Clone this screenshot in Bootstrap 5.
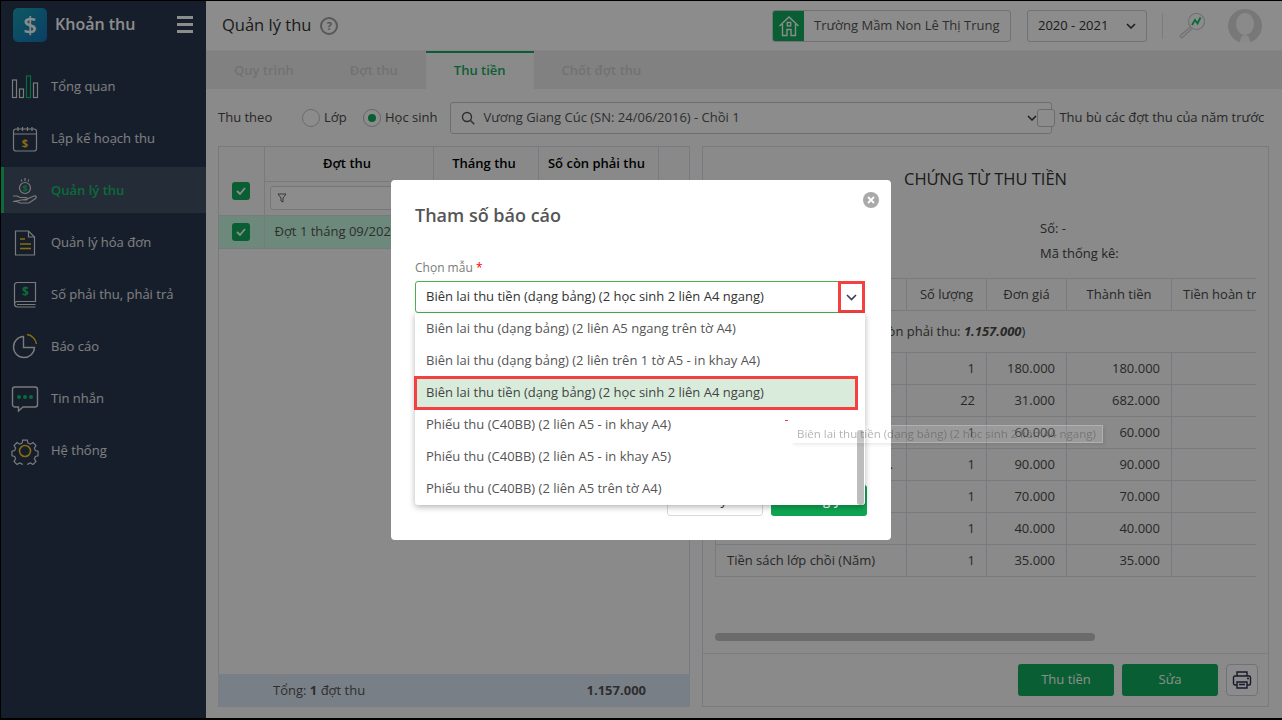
<!doctype html>
<html lang="vi">
<head>
<meta charset="utf-8">
<title>Quản lý thu</title>
<link rel="stylesheet" href="https://cdn.jsdelivr.net/npm/bootstrap@5.3.0/dist/css/bootstrap.min.css">
<style>
html,body{height:100%;overflow:hidden}
body{font-family:"Open Sans","Noto Sans",sans-serif;font-size:13px;color:#4a4a4a;background:#000}
.app-frame{height:720px;padding:1px 0 2px 1px;background:#000}
.app-inner{height:100%;background:#fbfbfb}
.side-bar{width:205px;background:#283750;flex:none}
.side-head{height:62px;padding:7px 13px 0 12px}
.logo-box{width:34px;height:34px;border-radius:5px;background:linear-gradient(135deg,#17a2b3,#1372b8);color:#fff;font-size:24px;font-weight:600;line-height:34px;text-align:center}
.logo-name{font-size:16px;font-weight:600;color:#fff;margin-left:8px}
.burger{width:16px;margin-left:auto;margin-top:-1px}
.burger i{display:block;height:2.5px;background:#fff;margin-bottom:4.5px}
.side-item{height:46px;margin-bottom:6px;color:#e8e8e8;padding:2px 0 0 7px;gap:12px;border-left:3px solid transparent}
.side-item svg{flex:none}
.side-item.is-on{background:#435064;border-left-color:#14c36a;color:#14c36a;font-weight:600}
.top-bar{height:50px;background:#fff;border-bottom:1px solid #f0f0f0;padding:0 20px 0 16px;flex:none}
.page-name{font-size:16.5px;color:#333}
.help-dot{width:18px;height:18px;border:2px solid #a0a0a0;border-radius:50%;color:#999;font-size:11px;font-weight:700;line-height:14px;text-align:center;margin-left:9px}
.school-box{height:32px;width:239px;border:1px solid #cfcfcf;border-radius:3px;color:#555;overflow:hidden;margin-right:16px;margin-left:auto}
.school-ico{width:31px;height:100%;background:#12ad5d}
.school-name{margin-left:10px}
.year-box{height:32px;width:120px;border:1px solid #cfcfcf;border-radius:3px;padding:0 10px;color:#333}
.top-sep{width:1px;height:26px;background:#e0e0e0;margin:0 16px 0 15px}
.top-search{margin-right:23px}
.tab-bar{height:38px;background:#ececec;padding-left:0;margin:0;list-style:none;flex:none}
.tab-one{padding:0 28px;line-height:38px;color:#cfcfcf;font-weight:600}
.tab-one.is-on{background:#fbfbfb;color:#12ad5d;box-shadow:inset 0 2px 0 #12ad5d}
.work-area{padding:13px 13px 11px 12px;min-height:0}
.filter-row{height:32px;margin-bottom:12px;flex:none}
.round-opt{width:18px;height:18px;border:1px solid #c4c4c4;border-radius:50%;background:#fff;margin-right:4px}
.round-opt.is-on{border-color:#bbb}
.round-opt.is-on::after{content:"";width:8px;height:8px;border-radius:50%;background:#12ad5d}
.combo-box{width:602px;height:32px;border:1px solid #c9c9c9;border-radius:3px;background:#fff;padding:0 10px;margin-left:13px;color:#555}
.tick-box{width:18px;height:18px;border-radius:3px;background:#12ad5d;flex:none}
.tick-empty{background:#fff;border:1px solid #c4c4c4;margin-left:-15px;margin-right:4px;position:relative;z-index:1}
.left-pane{width:472px;flex:none;border:1px solid #dcdee8;border-bottom:0}
.right-pane{flex:1;margin-left:12px;border:1px solid #dcdee8;min-width:0}
.grid-tbl{table-layout:fixed;border-collapse:collapse;width:470px;color:#333}
.grid-tbl th,.grid-tbl td{border:1px solid #dcdee8;font-weight:400;padding:0;vertical-align:middle}
.grid-tbl tr>*:first-child{border-left:0}
.grid-tbl tr>*:last-child{border-right:0}
.grid-tbl tr:first-child>*{border-top:0}
.head-cell{height:34px;text-align:center;background:#fafafa;color:#000!important;padding-right:3px!important}
.head-fill{background:#fafafa}
.head-tick{margin-top:20px}
.filter-cell{height:34px;background:#fafafa;padding:0 5px 1px!important}
.filter-input{height:24px;border:1px solid #d8d8d8;border-radius:3px;background:#fff;padding-left:6px;margin-right:-4px}
.row-sel>*{background:#c6fae1;height:33px;color:#555}
.row-sel .row-name{padding-left:10px;white-space:nowrap}
.sum-bar{height:33px;background:#dde8f5;margin:0 -1px;padding:0 44px 0 55px;color:#555}
.doc-title{font-size:16.5px;color:#333;text-align:center;margin:21px 0 0;line-height:22px;font-weight:400}
.doc-meta{margin:26px 0 0 337px;line-height:25px;color:#444}
.doc-wrap{margin:12px 12px 0 12px;overflow:hidden}
.doc-tbl{table-layout:fixed;border-collapse:collapse;width:800px;color:#4a4a4a}
.doc-tbl th,.doc-tbl td{border:1px solid #dcdee8;padding:0 11px;height:32px;white-space:nowrap;overflow:hidden;text-overflow:ellipsis;font-weight:400}
.doc-tbl th{text-align:center}
.doc-tbl .num{text-align:right}
.doc-tbl .sum-row td{height:42px;padding-left:16px}
.h-scroll{width:380px;height:8px;border-radius:4px;background:#c4c4c4;margin:auto 0 12px 12px}
.pane-foot{height:53px;border-top:1px solid #e4e4ea;padding:0 10px 0 0;gap:8px;flex:none}
.act-btn{width:96px;height:32px;background:#12ad5d;color:#fff;border:0;border-radius:3px;font-size:13px;padding:0}
.print-btn{width:32px;height:32px;border:1px solid #d0d0d8;border-radius:4px;background:#fff;padding:0}
.modal-backdrop.dim-layer{--bs-backdrop-opacity:.45}
.modal.form-modal{--bs-modal-zindex:1055;overflow:visible}
.form-dialog{width:500px;max-width:500px;margin:180px 0 0 391px}
.form-box{height:360px;border:0;border-radius:4px;padding:23px 24px 24px;background:#fff;color:#333}
.form-title{font-size:18px;font-weight:600;color:#555;line-height:24px;margin:0}
.close-dot{position:absolute;right:12px;top:12px;width:16px;height:16px;border-radius:50%;background:#a9a9a9;padding:0;border:0}
.form-label-t{color:#7b7b7b;font-size:12px;margin:32px 0 4px;line-height:18px}
.req-star{color:#f00}
.pick-wrap{position:relative;width:450px}
.pick-box{height:32px;border:1px solid #4caf50;border-radius:3px;padding-left:10px;background:#fff}
.pick-arrow{width:27px;height:32px;margin:-1px -1px -1px auto;border:3px solid #f44040}
.pick-menu{position:absolute;left:0;top:32px;width:450px;height:192px;background:#fff;box-shadow:0 2px 6px rgba(0,0,0,.3);border-radius:0 0 3px 3px;z-index:3}
.pick-item{height:32px;line-height:30px;padding-left:11px;width:442px;color:#555}
.pick-item.is-picked{background:#d9ecdc;outline:3px solid #f44040;outline-offset:-2px;color:#444}
.menu-thumb{position:absolute;right:1px;top:117px;bottom:0;width:7px;border-radius:3px;background:#bdbdbd}
.hint-tip{position:absolute;left:376px;top:112px;width:312px;height:18px;background:rgba(255,255,255,.14);border:1px solid rgba(255,255,255,.22);box-shadow:2px 2px 3px rgba(0,0,0,.08);font-size:11.5px;line-height:16px;padding-left:5px;color:rgba(70,60,65,.4);white-space:nowrap;z-index:4}
.hint-mark{position:absolute;left:370px;top:107px;width:3px;height:1px;background:#f44040;z-index:4}
.form-actions{margin-top:auto;gap:8px}
.ghost-btn{width:96px;height:31px;border:1px solid #d9d9d9;background:#fff;border-radius:3px;font-size:13px;color:#333;padding:0}
.ok-btn{width:96px;height:31px;border:0;background:#0ea552;color:#fff;border-radius:3px;font-size:13px;font-weight:600;padding:0}
</style>
</head>
<body>
<div class="app-frame">
<div class="app-inner d-flex">
  <aside class="side-bar d-flex flex-column">
    <div class="side-head d-flex align-items-start">
      <div class="logo-box">$</div>
      <div class="logo-name lh-1 mt-2">Khoản thu</div>
      <div class="burger mt-2"><i></i><i></i><i></i></div>
    </div>
    <div class="side-item d-flex align-items-center">
      <svg width="28" height="24" viewBox="0 0 28 24" fill="none" stroke="#e0e0e0" stroke-width="1.2"><rect x="1.5" y="5" width="4" height="17.5"/><rect x="8.5" y="14" width="4" height="8.5"/><rect x="15.5" y="1" width="4" height="21.5" stroke="#14c36a"/><rect x="22.5" y="8" width="4" height="14.5"/></svg>
      <span>Tổng quan</span>
    </div>
    <div class="side-item d-flex align-items-center">
      <svg width="28" height="28" viewBox="0 0 28 28" fill="none" stroke="#e0e0e0" stroke-width="1.2"><rect x="2.5" y="4" width="23" height="22" rx="2.5"/><path d="M2.500 9h23M7 2v4M11.500 2v4M16.500 2v4M21 2v4"/><text x="14" y="22" text-anchor="middle" font-size="11" font-weight="700" fill="#fbc71d" stroke="none" font-family="Open Sans">$</text></svg>
      <span>Lập kế hoạch thu</span>
    </div>
    <div class="side-item is-on d-flex align-items-center">
      <svg width="28" height="28" viewBox="0 0 28 28" fill="none" stroke="#e0e0e0" stroke-width="1.2"><circle cx="14" cy="11" r="5.5"/><text x="14" y="14.500" text-anchor="middle" font-size="9" font-weight="700" fill="#14c36a" stroke="none" font-family="Open Sans">$</text><path d="M14 1v3M10.500 2.500v2M17.500 2.500v2M2 19h4l3 1.500h6c1.500 0 1.500 2.500 0 2.500h-3M16 22l7-3c2-.7 3 1 1.500 2.500L18 26H9l-3-1.500H2z"/></svg>
      <span>Quản lý thu</span>
    </div>
    <div class="side-item d-flex align-items-center">
      <svg width="28" height="28" viewBox="0 0 28 28" fill="none" stroke="#e0e0e0" stroke-width="1.2"><path d="M4.500 2h13l6 6v18h-19z"/><path d="M17.500 2v6h6"/><path d="M9 10h5M9 15h11M9 19.500h11" stroke="#fbc71d" stroke-width="1.6"/></svg>
      <span>Quản lý hóa đơn</span>
    </div>
    <div class="side-item d-flex align-items-center">
      <svg width="28" height="28" viewBox="0 0 28 28" fill="none" stroke="#e0e0e0" stroke-width="1.2"><path d="M6.500 1.500h18v19h-18c-2 0-3 1-3 2.500V4c0-1.500 1-2.500 3-2.500zM3.500 23c0 1.500 1 3 3 3h18M6 23.500h18.500"/><text x="14.500" y="15" text-anchor="middle" font-size="12" font-weight="700" fill="#14c36a" stroke="none" font-family="Open Sans">$</text></svg>
      <span>Số phải thu, phải trả</span>
    </div>
    <div class="side-item d-flex align-items-center">
      <svg width="28" height="28" viewBox="0 0 28 28" fill="none" stroke="#e0e0e0" stroke-width="1.4"><path d="M12.500 3.500a10.500 10.500 0 1 0 11 11h-11z"/><path d="M16 1.500a11 11 0 0 1 9.500 9.500" stroke="#fbc71d"/></svg>
      <span>Báo cáo</span>
    </div>
    <div class="side-item d-flex align-items-center">
      <svg width="28" height="28" viewBox="0 0 28 28" fill="none" stroke="#e0e0e0" stroke-width="1.4"><path d="M4 2h20a2.500 2.500 0 0 1 2.500 2.500v15A2.500 2.500 0 0 1 24 22H12l-4.500 4v-4H4a2.500 2.500 0 0 1-2.500-2.500v-15A2.500 2.500 0 0 1 4 2z"/><g fill="#14c36a" stroke="none"><circle cx="8" cy="12" r="2"/><circle cx="14" cy="12" r="2"/><circle cx="20" cy="12" r="2"/></g></svg>
      <span>Tin nhắn</span>
    </div>
    <div class="side-item d-flex align-items-center">
      <svg width="28" height="28" viewBox="0 0 28 28" fill="none" stroke="#e0e0e0" stroke-width="1.3"><path d="M11.500 2h5l.8 3.300 2.700 1.100 2.900-1.800 3.300 3.300-1.800 2.900 1.100 2.700 3 .8v5l-3 .8-1.100 2.700 1.800 2.900-3.300 3.300-2.900-1.800-2.700 1.100-.8 3h-5l-.8-3-2.700-1.100-2.900 1.800-3.300-3.300 1.800-2.900-1.100-2.700-3-.8v-5l3-.8 1.100-2.700-1.800-2.900 3.300-3.300 2.900 1.800 2.700-1.100z" transform="translate(1.400 1.400) scale(.9)"/><circle cx="14" cy="14" r="5.500" stroke="#fbc71d" stroke-width="1.6"/></svg>
      <span>Hệ thống</span>
    </div>
  </aside>

  <main class="flex-grow-1 d-flex flex-column" style="min-width:0">
    <header class="top-bar d-flex align-items-center">
      <span class="page-name">Quản lý thu</span>
      <span class="help-dot">?</span>
      <div class="school-box d-flex align-items-center">
        <span class="school-ico d-flex align-items-center justify-content-center">
          <svg width="22" height="22" viewBox="0 0 22 22" fill="none" stroke="#fff" stroke-width="1.4"><path d="M1.500 11 11 2l9.500 9M4.500 9v11.500h4.500v-6h4v6h4.500V9"/><rect x="9.300" y="7.500" width="3.400" height="3.400"/></svg>
        </span>
        <span class="school-name">Trường Mầm Non Lê Thị Trung</span>
      </div>
      <div class="year-box d-flex align-items-center justify-content-between">
        <span>2020 - 2021</span>
        <svg width="10" height="6" viewBox="0 0 10 6" fill="none" stroke="#333" stroke-width="1.5"><path d="m1 1 4 4 4-4"/></svg>
      </div>
      <span class="top-sep"></span>
      <svg width="26" height="26" viewBox="0 0 26 26" fill="none" stroke="#cfcfcf" stroke-width="1.2" class="top-search"><circle cx="17.500" cy="8.500" r="8"/><path d="M11.500 14 1.500 22.500c-1 1 .8 3 2 2l9.500-9"/><path d="m13 12 3-5 2.500 3.500 3-6" stroke="#14c36a" stroke-width="1.8"/></svg>
      <svg width="34" height="34" viewBox="0 0 34 34"><ellipse cx="17" cy="17" rx="17" ry="17" fill="#dadada"/><ellipse cx="17" cy="15" rx="9" ry="11" fill="#fbfbfb"/><path d="M11.500 34c1-5 2-8 5.500-8s4.500 3 5.500 8z" fill="#fbfbfb"/></svg>
    </header>
    <ul class="tab-bar d-flex">
      <li class="tab-one">Quy trình</li>
      <li class="tab-one">Đợt thu</li>
      <li class="tab-one is-on">Thu tiền</li>
      <li class="tab-one">Chốt đợt thu</li>
    </ul>
    <div class="work-area flex-grow-1 d-flex flex-column">
      <div class="filter-row d-flex align-items-center">
        <span style="width:84px">Thu theo</span>
        <span class="round-opt"></span><span style="width:39px">Lớp</span>
        <span class="round-opt is-on d-inline-flex align-items-center justify-content-center"></span><span>Học sinh</span>
        <div class="combo-box d-flex align-items-center">
          <svg width="14" height="14" viewBox="0 0 14 14" fill="none" stroke="#555" stroke-width="1.4" class="me-2 flex-none"><circle cx="6" cy="6" r="4.500"/><path d="m9.500 9.500 3.800 3.800"/></svg>
          <span>Vương Giang Cúc (SN: 24/06/2016) - Chồi 1</span>
          <svg width="10" height="6" viewBox="0 0 10 6" fill="none" stroke="#333" stroke-width="1.5" class="ms-auto me-1"><path d="m1 1 4 4 4-4"/></svg>
        </div>
        <span class="tick-box tick-empty"></span>
        <span class="text-nowrap">Thu bù các đợt thu của năm trước</span>
      </div>
      <div class="d-flex flex-grow-1" style="min-height:0">
        <section class="left-pane d-flex flex-column">
          <table class="grid-tbl">
            <colgroup><col style="width:45px"><col style="width:169px"><col style="width:105px"><col style="width:120px"><col style="width:31px"></colgroup>
            <tr><th class="head-fill" rowspan="2"><span class="tick-box head-tick d-flex align-items-center justify-content-center mx-auto"><svg width="12" height="10" viewBox="0 0 12 10" fill="none" stroke="#fff" stroke-width="1.8"><path d="m2 5 3 3 5-6"/></svg></span></th><th class="head-cell fw-semibold">Đợt thu</th><th class="head-cell fw-semibold">Tháng thu</th><th class="head-cell fw-semibold">Số còn phải thu</th><th class="head-fill" rowspan="2"></th></tr>
            <tr><td class="filter-cell" colspan="3"><div class="filter-input d-flex align-items-center"><svg width="10" height="10" viewBox="0 0 10 10" fill="none" stroke="#666"><path d="M1 1h8L6 5v4L4 8V5z"/></svg></div></td></tr>
            <tr class="row-sel"><td><span class="tick-box d-flex align-items-center justify-content-center mx-auto"><svg width="12" height="10" viewBox="0 0 12 10" fill="none" stroke="#fff" stroke-width="1.8"><path d="m2 5 3 3 5-6"/></svg></span></td><td class="row-name">Đợt 1 tháng 09/2020</td><td></td><td></td><td></td></tr>
          </table>
          <div class="sum-bar mt-auto d-flex align-items-center justify-content-between"><span>Tổng: <b>1</b> đợt thu</span><b>1.157.000</b></div>
        </section>
        <section class="right-pane d-flex flex-column">
          <h2 class="doc-title">CHỨNG TỪ THU TIỀN</h2>
          <div class="doc-meta"><div>Số: -</div><div>Mã thống kê:</div></div>
          <div class="doc-wrap">
            <table class="doc-tbl">
              <colgroup><col style="width:191px"><col style="width:80px"><col style="width:80px"><col style="width:105px"><col style="width:344px"></colgroup>
              <tr><th>Khoản thu</th><th>Số lượng</th><th>Đơn giá</th><th>Thành tiền</th><th class="text-start">Tiền hoàn trả</th></tr>
              <tr class="sum-row"><td colspan="5">Đợt 1 tháng 09/2020 (Số còn phải thu: <b><i>1.157.000</i></b>)</td></tr>
              <tr><td>Tiền học phí (Tháng)</td><td class="num">1</td><td class="num">180.000</td><td class="num">180.000</td><td></td></tr>
              <tr><td>Tiền ăn (Ngày)</td><td class="num">22</td><td class="num">31.000</td><td class="num">682.000</td><td></td></tr>
              <tr><td>Tiền nước (Tháng)</td><td class="num">1</td><td class="num">60.000</td><td class="num">60.000</td><td></td></tr>
              <tr><td>Tiền đồ dùng học tập cá nhân cả năm</td><td class="num">1</td><td class="num">90.000</td><td class="num">90.000</td><td></td></tr>
              <tr><td>Tiền đồng phục (Năm)</td><td class="num">1</td><td class="num">70.000</td><td class="num">70.000</td><td></td></tr>
              <tr><td>Tiền vệ sinh (Tháng)</td><td class="num">1</td><td class="num">40.000</td><td class="num">40.000</td><td></td></tr>
              <tr><td>Tiền sách lớp chồi (Năm)</td><td class="num">1</td><td class="num">35.000</td><td class="num">35.000</td><td></td></tr>
            </table>
          </div>
          <div class="h-scroll"></div>
          <div class="pane-foot d-flex align-items-center justify-content-end">
            <button class="act-btn" type="button">Thu tiền</button>
            <button class="act-btn" type="button">Sửa</button>
            <button class="print-btn d-flex align-items-center justify-content-center" type="button"><svg width="20" height="20" viewBox="0 0 20 20" fill="none" stroke="#2a3050" stroke-width="1.4"><path d="M5 6V2h10v4M5 15H3a1.500 1.500 0 0 1-1.500-1.500v-6A1.500 1.500 0 0 1 3 6h14a1.500 1.500 0 0 1 1.500 1.500v6A1.500 1.500 0 0 1 17 15h-2"/><path d="M5 12h10v6H5zM7 14.500h6M15 8.500h2"/></svg></button>
          </div>
        </section>
      </div>
    </div>
  </main>
</div>
</div>

<div class="modal-backdrop dim-layer show"></div>
<div class="modal form-modal d-block" tabindex="-1">
  <div class="form-dialog modal-dialog">
    <div class="modal-content form-box d-flex flex-column">
      <button class="close-dot d-flex align-items-center justify-content-center" type="button" aria-label="Đóng"><svg width="8" height="8" viewBox="0 0 8 8" stroke="#fff" stroke-width="1.8"><path d="m1 1 6 6M7 1 1 7"/></svg></button>
      <h5 class="form-title">Tham số báo cáo</h5>
      <div class="form-label-t">Chọn mẫu <span class="req-star">*</span></div>
      <div class="pick-wrap">
        <div class="pick-box d-flex align-items-center">
          <span>Biên lai thu tiền (dạng bảng) (2 học sinh 2 liên A4 ngang)</span>
          <span class="pick-arrow d-flex align-items-center justify-content-center"><svg width="11" height="7" viewBox="0 0 11 7" fill="none" stroke="#3a3a5a" stroke-width="1.6"><path d="m1 1 4.500 4.500L10 1"/></svg></span>
        </div>
        <div class="pick-menu">
          <div class="pick-item">Biên lai thu (dạng bảng) (2 liên A5 ngang trên tờ A4)</div>
          <div class="pick-item">Biên lai thu (dạng bảng) (2 liên trên 1 tờ A5 - in khay A4)</div>
          <div class="pick-item is-picked">Biên lai thu tiền (dạng bảng) (2 học sinh 2 liên A4 ngang)</div>
          <div class="pick-item">Phiếu thu (C40BB) (2 liên A5 - in khay A4)</div>
          <div class="pick-item">Phiếu thu (C40BB) (2 liên A5 - in khay A5)</div>
          <div class="pick-item">Phiếu thu (C40BB) (2 liên A5 trên tờ A4)</div>
          <span class="menu-thumb"></span>
          <span class="hint-mark"></span>
          <div class="hint-tip">Biên lai thu tiền (dạng bảng) (2 học sinh 2 liên A4 ngang)</div>
        </div>
      </div>
      <div class="form-actions d-flex justify-content-end">
        <button class="ghost-btn" type="button">Hủy</button>
        <button class="ok-btn" type="button">Đồng ý</button>
      </div>
    </div>
  </div>
</div>
</body>
</html>
